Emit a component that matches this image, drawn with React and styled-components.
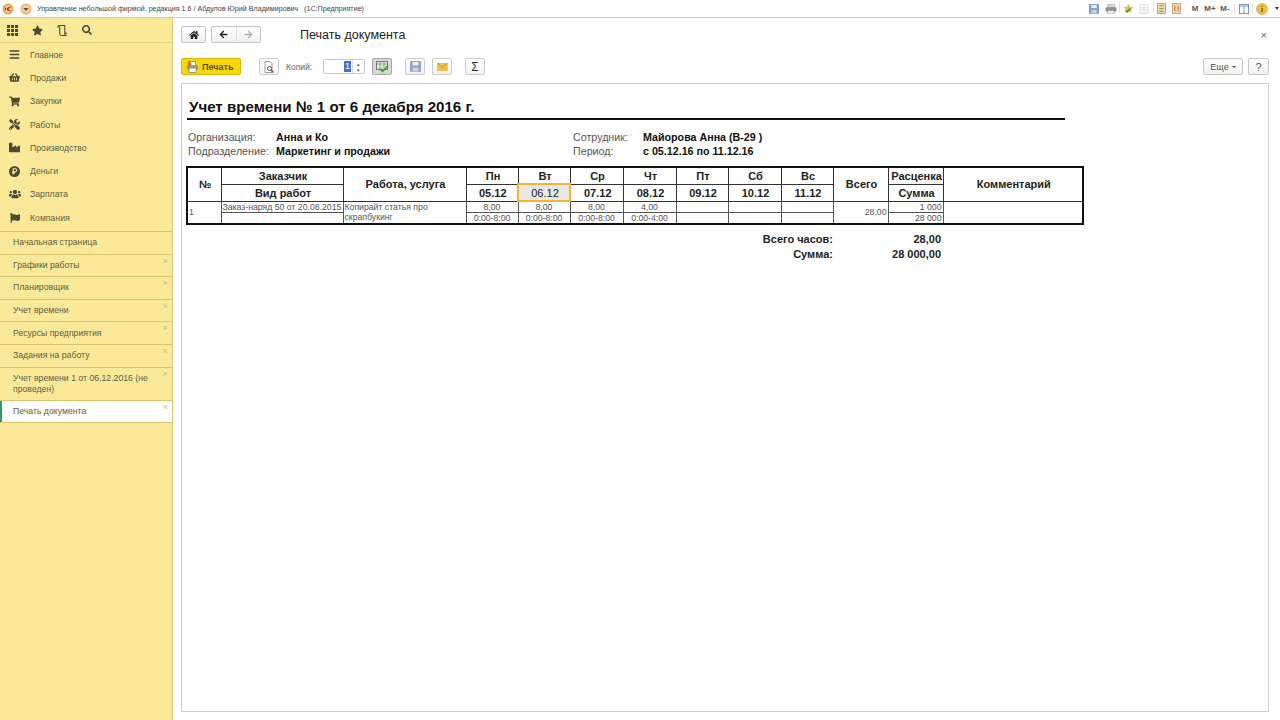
import styled, { createGlobalStyle } from "styled-components";
import {
  FaArrowLeft,
  FaArrowRight,
  FaBars,
  FaFlag,
  FaHome,
  FaIndustry,
  FaSearch,
  FaShoppingBasket,
  FaShoppingCart,
  FaStar,
  FaTools,
  FaUsers,
} from "react-icons/fa";

const GlobalStyle = createGlobalStyle`
  html, body {
    margin: 0;
    padding: 0;
    background: #fff;
    font-family: "Liberation Sans", Arial, sans-serif;
  }
  * {
    box-sizing: border-box;
  }
`;

const GridIcon = () => (
  <svg width="11" height="11" viewBox="0 0 11 11" fill="#4a4a38">
    {[0, 4, 8].map((y) =>
      [0, 4, 8].map((x) => <rect key={`${x}-${y}`} x={x} y={y} width="3" height="3" />)
    )}
  </svg>
);

const HistoryIcon = () => (
  <svg width="11" height="13" viewBox="0 0 12 13" fill="none" stroke="#4a4a38" strokeWidth="1.2">
    <path d="M1 2.5C1 1.5 2 1 3 1h5.5v9c0 1 1 2 2 2H5c-1 0-2-1-2-2V3.5C3 2.5 2 2 1 2.5z" />
    <path d="M8.5 9.5h2.5" />
  </svg>
);

const RubleIcon = () => (
  <svg width="11" height="11" viewBox="0 0 11 11">
    <circle cx="5.5" cy="5.5" r="5.5" fill="#4a4a38" />
    <path d="M4.2 8.5V2.8h1.9a1.5 1.5 0 0 1 0 3.1H3.2M3.2 7h3" fill="none" stroke="#fbe99a" strokeWidth="1.1" />
  </svg>
);

const navItems = [
  { label: "Главное", icon: <FaBars size={11} /> },
  { label: "Продажи", icon: <FaShoppingBasket size={11} /> },
  { label: "Закупки", icon: <FaShoppingCart size={11} /> },
  { label: "Работы", icon: <FaTools size={11} /> },
  { label: "Производство", icon: <FaIndustry size={11} /> },
  { label: "Деньги", icon: <RubleIcon /> },
  { label: "Зарплата", icon: <FaUsers size={12} /> },
  { label: "Компания", icon: <FaFlag size={10} /> },
];

const openItems = [
  { label: "Начальная страница", fixed: true },
  { label: "Графики работы" },
  { label: "Планировщик" },
  { label: "Учет времени" },
  { label: "Ресурсы предприятия" },
  { label: "Задания на работу" },
  { label: "Учет времени 1 от 06.12.2016 (не проведен)" },
  { label: "Печать документа", active: true },
];

const colWidths = [34, 122, 123, 52, 52, 53, 53, 52, 53, 52, 55, 55, 140];

const days = [
  { name: "Пн", date: "05.12", hours: "8,00", range: "0:00-8:00" },
  { name: "Вт", date: "06.12", hours: "8,00", range: "0:00-8:00", selected: true },
  { name: "Ср", date: "07.12", hours: "8,00", range: "0:00-8:00" },
  { name: "Чт", date: "08.12", hours: "4,00", range: "0:00-4:00" },
  { name: "Пт", date: "09.12" },
  { name: "Сб", date: "10.12" },
  { name: "Вс", date: "11.12" },
];

const App = () => {
  return (
    <>
      <GlobalStyle />
      <Page>
        <TitleBar>
          <TitleLogo>
            <svg width="12" height="12" viewBox="0 0 12 12">
              <circle cx="6" cy="6" r="5.5" fill="#f0a23c" />
              <circle cx="6" cy="6" r="3.6" fill="#fbe3b8" />
              <path d="M3.5 4.5v3M5.5 4.5v3M8.5 4.6a1.6 1.6 0 1 0 0 2.8" fill="none" stroke="#c8281e" strokeWidth="1.2" />
            </svg>
          </TitleLogo>
          <TitleMenu>
            <svg width="12" height="12" viewBox="0 0 12 12">
              <circle cx="6" cy="6" r="5.5" fill="#e8b57c" />
              <circle cx="6" cy="6" r="3.8" fill="#f4d2a6" />
              <path d="M3.5 5h5L6 8z" fill="#7a4a1e" />
            </svg>
          </TitleMenu>
          <TitleText>Управление небольшой фирмой, редакция 1.6 / Абдулов Юрий Владимирович&nbsp;&nbsp; (1С:Предприятие)</TitleText>
          <TitleTools>
            <TitleIcon $width={10}>
              <svg width="10" height="10" viewBox="0 0 11 11">
                <rect width="11" height="11" rx="1" fill="#7f9fc0" />
                <rect x="2.5" y="1" width="6" height="3.5" fill="#e6eef6" />
                <rect x="2.5" y="6.5" width="6" height="4" fill="#c4d4e4" />
              </svg>
            </TitleIcon>
            <TitleIcon $width={12} $ml={6}>
              <svg width="12" height="10" viewBox="0 0 13 11">
                <rect x="3" y="0" width="7" height="4" fill="#d8d8d8" stroke="#8a8a8a" strokeWidth=".6" />
                <rect x="0.5" y="3.5" width="12" height="5" rx="1.5" fill="#8f8f8f" />
                <rect x="3" y="7" width="7" height="4" fill="#eeeeee" stroke="#8a8a8a" strokeWidth=".6" />
              </svg>
            </TitleIcon>
            <TitleIcon $width={11} $ml={6} $sep>
              <svg width="11" height="11" viewBox="0 0 13 12">
                <path d="M6.5 0l1.8 3.8 4.200.5-3.100 2.800.8 4.100-3.700-2-3.700 2 .8-4.100L.5 4.300l4.200-.5z" fill="#dcc050" />
                <path d="M3 8l2 2 4-4" fill="none" stroke="#4e9a2e" strokeWidth="1.800" />
              </svg>
            </TitleIcon>
            <TitleIcon $width={10} $ml={5}>
              <svg width="10" height="10" viewBox="0 0 10 11">
                <rect x="0.5" y="0.5" width="9" height="10" rx="1" fill="#f6f6f6" stroke="#dcdcdc" />
                <path d="M2.500 4h5M2.500 6.500h5" stroke="#dcdcdc" />
              </svg>
            </TitleIcon>
            <TitleIcon $width={9} $ml={8} $sep>
              <svg width="9" height="11" viewBox="0 0 11 13">
                <rect x="0.5" y="0.5" width="10" height="12" fill="#ecd9a8" stroke="#b59c64" />
                <path d="M3 3h5M3 6.500h5M3 10h5" stroke="#6c8a4a" />
              </svg>
            </TitleIcon>
            <TitleIcon $width={9} $ml={6}>
              <svg width="9" height="11" viewBox="0 0 11 13">
                <rect x="0.5" y="0.5" width="10" height="12" fill="#f2d8b4" stroke="#c49a64" />
                <path d="M3.500 3v7M7.500 3v7" stroke="#c8502e" />
              </svg>
            </TitleIcon>
            <MemoButton $width={8} $ml={10}>M</MemoButton>
            <MemoButton $width={12} $ml={5}>M+</MemoButton>
            <MemoButton $width={12} $ml={3}>M-</MemoButton>
            <TitleIcon $width={11} $ml={7} $sep>
              <svg width="10" height="10" viewBox="0 0 12 12">
                <rect x="0.5" y="0.5" width="11" height="11" fill="#fff" stroke="#5c86ae" />
                <path d="M0.500 2.500h11M6 2.500v9" stroke="#5c86ae" />
              </svg>
            </TitleIcon>
            <TitleIcon $width={12} $ml={7} $sep>
              <svg width="12" height="12" viewBox="0 0 12 12">
                <circle cx="6" cy="6" r="5.500" fill="#f0c040" stroke="#c89a30" strokeWidth=".6" />
                <path d="M6 5v4M6 2.500v1.200" stroke="#6a5a24" strokeWidth="1.300" />
              </svg>
            </TitleIcon>
            <Caret />
          </TitleTools>
        </TitleBar>

        <Main>
          <Sidebar>
            <SideTools>
              <GridIcon />
              <FaStar size={11} />
              <HistoryIcon />
              <FaSearch size={10} />
            </SideTools>
            <NavList>
              {navItems.map((item) => (
                <NavItem key={item.label}>
                  <NavIcon>{item.icon}</NavIcon>
                  {item.label}
                </NavItem>
              ))}
            </NavList>
            <OpenList>
              {openItems.map((item) => (
                <OpenItem key={item.label} $active={item.active}>
                  {item.label}
                  {!item.fixed && <OpenClose>×</OpenClose>}
                </OpenItem>
              ))}
            </OpenList>
          </Sidebar>

          <Content>
            <HeaderRow>
              <RoundButton $width={25}>
                <FaHome size={10} color="#222" />
              </RoundButton>
              <NavGroup>
                <NavSegment>
                  <FaArrowLeft size={9} color="#222" />
                </NavSegment>
                <NavSegment>
                  <FaArrowRight size={9} color="#b0b0b0" />
                </NavSegment>
              </NavGroup>
              <PageTitle>Печать документа</PageTitle>
              <CloseMark>×</CloseMark>
            </HeaderRow>

            <ToolRow>
              <PrintButton>
                <svg width="13" height="12" viewBox="0 0 12 12">
                  <rect x="2" y="0.500" width="7" height="4" fill="#fff" stroke="#777" strokeWidth=".7" />
                  <rect x="0.500" y="4" width="11" height="5" rx="1" fill="#9b9b8a" />
                  <rect x="2.500" y="7" width="7" height="4.500" fill="#fff" stroke="#777" strokeWidth=".7" />
                  <circle cx="3" cy="3" r="2" fill="#d8732a" />
                </svg>
                Печать
              </PrintButton>
              <IconButton $ml={18}>
                <svg width="12" height="12" viewBox="0 0 12 12" fill="none">
                  <path d="M2 .500h5l2 2V11.500H2z" fill="#fff" stroke="#999" />
                  <circle cx="6.500" cy="7.500" r="2" stroke="#555" />
                  <path d="M8 9l2.500 2.500" stroke="#555" strokeWidth="1.300" />
                </svg>
              </IconButton>
              <CopiesLabel>Копий:</CopiesLabel>
              <CopiesBox>
                <CopiesInput>
                  <CopiesValue>1</CopiesValue>
                </CopiesInput>
                <Spinner>
                  <span>▴</span>
                  <span>▾</span>
                </Spinner>
              </CopiesBox>
              <IconButton $ml={7} $pressed>
                <svg width="13" height="12" viewBox="0 0 13 12">
                  <rect x="0.500" y="0.500" width="11" height="8" fill="#dfe8d8" stroke="#6b7f6b" />
                  <path d="M0.500 3h11M4 .500v8M8 .500v8" stroke="#6b7f6b" strokeWidth=".6" />
                  <path d="M4 7.500l2.500 3L12 4.500" fill="none" stroke="#3fa52c" strokeWidth="1.800" />
                </svg>
              </IconButton>
              <IconButton $ml={13}>
                <svg width="11" height="11" viewBox="0 0 11 11">
                  <rect width="11" height="11" rx="1" fill="#8aa6c4" />
                  <rect x="2.500" y="1" width="6" height="3.500" fill="#e6eef6" />
                  <rect x="2.500" y="6.500" width="6" height="4" fill="#c4d4e4" />
                </svg>
              </IconButton>
              <IconButton $ml={7}>
                <svg width="11" height="8" viewBox="0 0 12 9">
                  <rect width="12" height="9" fill="#ecc04a" />
                  <path d="M0 0l6 5 6-5" fill="none" stroke="#c8962a" />
                </svg>
              </IconButton>
              <IconButton $ml={13}>
                <Sigma>Σ</Sigma>
              </IconButton>
              <ToolSpacer />
              <TextButton $width={40}>
                Еще <SmallCaret />
              </TextButton>
              <TextButton $width={21} $ml={5} $strong>
                ?
              </TextButton>
            </ToolRow>

            <Sheet>
              <DocTitle>Учет времени № 1 от 6 декабря 2016 г.</DocTitle>
              <InfoGrid>
                <InfoLabel>Организация:</InfoLabel>
                <InfoValue>Анна и Ко</InfoValue>
                <InfoLabel>Сотрудник:</InfoLabel>
                <InfoValue>Майорова Анна (В-29 )</InfoValue>
                <InfoLabel>Подразделение:</InfoLabel>
                <InfoValue>Маркетинг и продажи</InfoValue>
                <InfoLabel>Период:</InfoLabel>
                <InfoValue>с 05.12.16 по 11.12.16</InfoValue>
              </InfoGrid>

              <DocTable>
                <colgroup>
                  {colWidths.map((width, index) => (
                    <col key={index} style={{ width }} />
                  ))}
                </colgroup>
                <thead>
                  <tr>
                    <HeadCell rowSpan={2}>№</HeadCell>
                    <HeadCell>Заказчик</HeadCell>
                    <HeadCell rowSpan={2}>Работа, услуга</HeadCell>
                    {days.map((day) => (
                      <HeadCell key={day.name}>{day.name}</HeadCell>
                    ))}
                    <HeadCell rowSpan={2}>Всего</HeadCell>
                    <HeadCell>Расценка</HeadCell>
                    <HeadCell rowSpan={2}>Комментарий</HeadCell>
                  </tr>
                  <tr>
                    <HeadCell>Вид работ</HeadCell>
                    {days.map((day) => (
                      <HeadCell key={day.date} $selected={day.selected}>
                        {day.date}
                      </HeadCell>
                    ))}
                    <HeadCell>Сумма</HeadCell>
                  </tr>
                </thead>
                <tbody>
                  <BodyRow>
                    <DataCell rowSpan={2} $align="left">
                      1
                    </DataCell>
                    <DataCell $align="left">Заказ-наряд 50 от 20.08.2015</DataCell>
                    <DataCell rowSpan={2} $align="left">
                      Копирайт статья про скрапбукинг
                    </DataCell>
                    {days.map((day) => (
                      <DataCell key={day.name}>{day.hours}</DataCell>
                    ))}
                    <DataCell rowSpan={2} $align="right">
                      28,00
                    </DataCell>
                    <DataCell $align="right">1 000</DataCell>
                    <DataCell rowSpan={2} />
                  </BodyRow>
                  <BodyRow>
                    <DataCell />
                    {days.map((day) => (
                      <DataCell key={day.name}>{day.range}</DataCell>
                    ))}
                    <DataCell $align="right">28 000</DataCell>
                  </BodyRow>
                </tbody>
              </DocTable>

              <Totals>
                <TotalLabel>Всего часов:</TotalLabel>
                <TotalValue>28,00</TotalValue>
                <TotalLabel>Сумма:</TotalLabel>
                <TotalValue>28 000,00</TotalValue>
              </Totals>
            </Sheet>
          </Content>
        </Main>
      </Page>
    </>
  );
};

export default App;

const Page = styled.div`
  width: 1280px;
  height: 720px;
  display: flex;
  flex-direction: column;
  overflow: hidden;
`;

const TitleBar = styled.div`
  height: 18px;
  flex: none;
  display: flex;
  align-items: center;
  padding: 0 0 0 2px;
  background: #fff;
  border-bottom: 1px solid #c8c8c8;
`;

const TitleLogo = styled.div`
  width: 16px;
  height: 12px;
  display: flex;
`;

const TitleMenu = styled.div`
  width: 19px;
  height: 12px;
  display: flex;
  padding-left: 2px;
`;

const TitleText = styled.div`
  font-size: 7.15px;
  color: #444;
  white-space: nowrap;
`;

const TitleTools = styled.div`
  margin-left: auto;
  display: flex;
  align-items: center;
`;

const TitleIcon = styled.div`
  position: relative;
  display: flex;
  align-items: center;
  justify-content: center;
  width: ${(props) => props.$width}px;
  margin-left: ${(props) => props.$ml || 0}px;
  &::before {
    content: "";
    display: ${(props) => (props.$sep ? "block" : "none")};
    position: absolute;
    left: -4px;
    top: 0;
    bottom: 1px;
    width: 1px;
    background: #e2e2e2;
  }
`;

const MemoButton = styled.div`
  width: ${(props) => props.$width}px;
  margin-left: ${(props) => props.$ml}px;
  font-size: 8px;
  font-weight: 700;
  color: #6a5240;
  text-align: center;
`;

const Caret = styled.div`
  width: 0;
  height: 0;
  margin-left: 7px;
  margin-right: 1px;
  border-left: 2.5px solid transparent;
  border-right: 2.5px solid transparent;
  border-top: 3px solid #333;
`;

const Main = styled.div`
  flex: 1;
  display: flex;
  min-height: 0;
`;

const Sidebar = styled.div`
  width: 173px;
  flex: none;
  display: flex;
  flex-direction: column;
  background: #fbe99a;
  border-right: 1px solid #d8c674;
`;

const SideTools = styled.div`
  height: 25px;
  flex: none;
  display: flex;
  align-items: center;
  gap: 14px;
  padding-left: 7px;
  color: #4a4a38;
  border-bottom: 1px solid #e6d27a;
`;

const NavList = styled.div`
  border-bottom: 1px solid #d9c66c;
  height: 189px;
  flex: none;
  display: flex;
  flex-direction: column;
`;

const NavItem = styled.div`
  height: 23.3px;
  flex: none;
  display: flex;
  align-items: center;
  font-size: 8.7px;
  color: #5f5e44;
`;

const NavIcon = styled.div`
  width: 30px;
  display: flex;
  justify-content: center;
  color: #4a4a38;
  padding-right: 1px;
`;

const OpenList = styled.div`
  display: flex;
  flex-direction: column;
`;

const OpenItem = styled.div`
  position: relative;
  min-height: 22.6px;
  display: flex;
  align-items: center;
  padding: 5px 18px 5px 13px;
  font-size: 8.7px;
  line-height: 11px;
  color: #5f5e44;
  border-bottom: 1px solid #d9c66c;
  background: ${(props) => (props.$active ? "#fff" : "transparent")};
  box-shadow: ${(props) => (props.$active ? "inset 2px 0 0 #2e9a68" : "none")};
`;

const OpenClose = styled.span`
  position: absolute;
  top: 1px;
  right: 4px;
  font-size: 9px;
  color: #c4bd9c;
`;

const Content = styled.div`
  flex: 1;
  min-width: 0;
  display: flex;
  flex-direction: column;
  padding: 8px 11px 8px 8px;
`;

const HeaderRow = styled.div`
  height: 17px;
  flex: none;
  display: flex;
  align-items: center;
`;

const RoundButton = styled.div`
  width: ${(props) => props.$width}px;
  height: 17px;
  display: flex;
  align-items: center;
  justify-content: center;
  background: linear-gradient(#fff, #f0f0f0);
  border: 1px solid #c4c4c4;
  border-radius: 2px;
`;

const NavGroup = styled.div`
  margin-left: 5px;
  width: 50px;
  height: 17px;
  display: flex;
  background: linear-gradient(#fff, #f0f0f0);
  border: 1px solid #c4c4c4;
  border-radius: 2px;
`;

const NavSegment = styled.div`
  flex: 1;
  display: flex;
  align-items: center;
  justify-content: center;
  & + & {
    border-left: 1px solid #dedede;
  }
`;

const PageTitle = styled.div`
  margin-left: 39px;
  font-size: 12.5px;
  color: #222;
`;

const CloseMark = styled.div`
  margin-left: auto;
  margin-right: 2px;
  font-size: 11px;
  color: #666;
`;

const ToolRow = styled.div`
  height: 17px;
  margin-top: 15px;
  flex: none;
  display: flex;
  align-items: center;
`;

const PrintButton = styled.div`
  width: 60px;
  height: 17px;
  display: flex;
  align-items: center;
  gap: 3px;
  padding-left: 4px;
  font-size: 9px;
  font-weight: 700;
  color: #5a4f10;
  background: #f8d60c;
  border: 1px solid #d8b80c;
  border-radius: 2px;
`;

const IconButton = styled.div`
  width: 20px;
  height: 17px;
  margin-left: ${(props) => props.$ml}px;
  display: flex;
  align-items: center;
  justify-content: center;
  background: ${(props) => (props.$pressed ? "#d8d8d8" : "linear-gradient(#fff, #f2f2f2)")};
  border: 1px solid ${(props) => (props.$pressed ? "#a8a8a8" : "#cccccc")};
  border-radius: 2px;
`;

const Sigma = styled.span`
  font-size: 12px;
  color: #333;
`;

const CopiesLabel = styled.div`
  margin-left: 7px;
  width: 37px;
  font-size: 8.5px;
  color: #666;
`;

const CopiesBox = styled.div`
  width: 42px;
  height: 15px;
  display: flex;
  background: #fff;
  border: 1px solid #c8c8c8;
  border-radius: 2px;
`;

const CopiesInput = styled.div`
  width: 28px;
  display: flex;
  justify-content: flex-end;
  align-items: center;
`;

const CopiesValue = styled.span`
  font-size: 9px;
  line-height: 11px;
  padding: 0 1px;
  margin-right: 1px;
  color: #fff;
  background: #3a78c8;
`;

const Spinner = styled.div`
  flex: 1;
  display: flex;
  flex-direction: column;
  align-items: center;
  justify-content: center;
  border-left: 1px solid #dcdcdc;
  font-size: 5px;
  line-height: 6px;
  color: #555;
`;

const ToolSpacer = styled.div`
  flex: 1;
`;

const TextButton = styled.div`
  width: ${(props) => props.$width}px;
  height: 17px;
  margin-left: ${(props) => props.$ml || 0}px;
  display: flex;
  align-items: center;
  justify-content: center;
  gap: 3px;
  font-size: ${(props) => (props.$strong ? 11 : 9)}px;
  color: #555;
  background: linear-gradient(#fff, #f0f0f0);
  border: 1px solid #c8c8c8;
  border-radius: 2px;
`;

const SmallCaret = styled.span`
  width: 0;
  height: 0;
  border-left: 2px solid transparent;
  border-right: 2px solid transparent;
  border-top: 2px solid #444;
`;

const Sheet = styled.div`
  flex: 1;
  margin-top: 8px;
  padding: 13px 0 0 5px;
  background: #fff;
  border: 1px solid #cfcfcf;
`;

const DocTitle = styled.div`
  width: 878px;
  height: 23px;
  padding-left: 2px;
  font-size: 15.1px;
  line-height: 20px;
  font-weight: 700;
  color: #111;
  border-bottom: 2px solid #111;
`;

const InfoGrid = styled.div`
  display: grid;
  grid-template-columns: 88px 297px 70px auto;
  grid-auto-rows: 14px;
  margin-top: 10px;
  margin-left: 1px;
  align-items: center;
  font-size: 10.7px;
`;

const InfoLabel = styled.div`
  color: #555;
`;

const InfoValue = styled.div`
  font-weight: 700;
  color: #111;
`;

const DocTable = styled.table`
  margin-top: 8px;
  margin-left: -1px;
  width: 896px;
  table-layout: fixed;
  border-collapse: collapse;
  border: 2px solid #111;
`;

const HeadCell = styled.th`
  height: 17px;
  padding: 0 0 0 2px;
  font-size: 11px;
  font-weight: ${(props) => (props.$selected ? 400 : 700)};
  color: #222;
  text-align: center;
  border: ${(props) => (props.$selected ? "2px solid #f2b632" : "1px solid #333")};
  background: ${(props) => (props.$selected ? "#e8e8e8" : "#fff")};
`;

const BodyRow = styled.tr`
  height: 11px;
`;

const DataCell = styled.td`
  padding: 0 1px;
  font-size: 8.7px;
  line-height: 10px;
  color: #555;
  text-align: ${(props) => props.$align || "center"};
  border: 1px solid #555;
  overflow: hidden;
  white-space: ${(props) => (props.rowSpan ? "normal" : "nowrap")};
`;

const Totals = styled.div`
  display: grid;
  grid-template-columns: 646px 108px;
  grid-auto-rows: 15px;
  margin-top: 8px;
  font-size: 11px;
  font-weight: 700;
  color: #222;
`;

const TotalLabel = styled.div`
  text-align: right;
`;

const TotalValue = styled.div`
  text-align: right;
`;
